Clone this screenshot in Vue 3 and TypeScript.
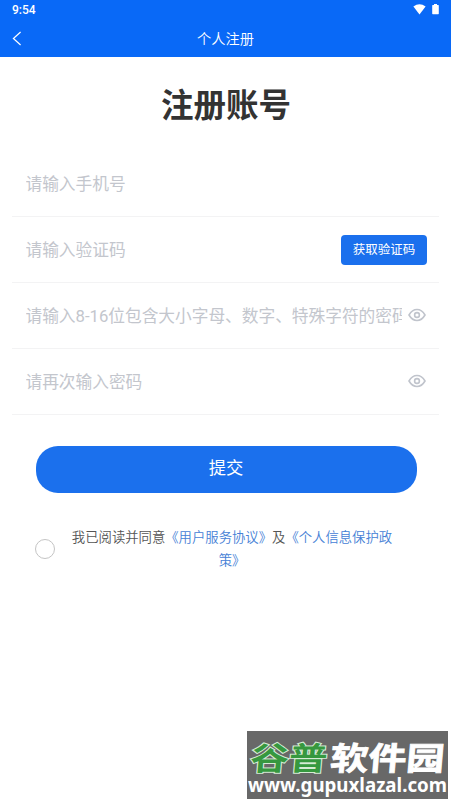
<script setup lang="ts">
import { ref } from 'vue'

interface Field {
  key: string
  placeholder: string
  kind: 'text' | 'code' | 'password'
}

const fields: Field[] = [
  { key: 'phone', placeholder: '请输入手机号', kind: 'text' },
  { key: 'code', placeholder: '请输入验证码', kind: 'code' },
  { key: 'password', placeholder: '请输入8-16位包含大小字母、数字、特殊字符的密码', kind: 'password' },
  { key: 'confirm', placeholder: '请再次输入密码', kind: 'password' },
]
const agreed = ref(false)
</script>

<template>
  <div class="page">
    <header class="top">
      <div class="status">
        <span class="time">9:54</span>
        <svg class="wifi" viewBox="0 0 13 11"><path d="M0.4 2.5Q6.5-1.9 12.6 2.5L6.5 10.4Z" fill="#fff" /></svg>
        <svg class="battery" viewBox="0 0 7 11"><path d="M2 0h3v1h1.2q.6 0 .6.6v8q0 .6-.6.6H.8q-.6 0-.6-.6v-8Q.2 1 .8 1H2z" fill="#fff" /></svg>
      </div>
      <nav class="nav">
        <svg class="back" viewBox="0 0 10 15"><path d="M8.6 1L1.4 7.5L8.6 14" fill="none" stroke="#fff" stroke-width="1.2" /></svg>
        <span class="nav-title">个人注册</span>
      </nav>
    </header>

    <h1 class="title">注册账号</h1>

    <form class="form" @submit.prevent>
      <div v-for="f in fields" :key="f.key" class="row">
        <span class="placeholder">{{ f.placeholder }}</span>
        <button v-if="f.kind === 'code'" type="button" class="get-code">获取验证码</button>
        <svg v-if="f.kind === 'password'" class="eye" viewBox="0 0 18 14">
          <path d="M1 7Q4.2 1.5 9 1.5T17 7Q13.8 12.5 9 12.5T1 7Z" />
          <circle cx="9" cy="7" r="2.4" />
        </svg>
      </div>
      <button type="submit" class="submit">提交</button>
    </form>

    <div class="agreement">
      <span class="radio" :class="{ on: agreed }" @click="agreed = !agreed"></span>
      <p class="terms">我已阅读并同意<a>《用户服务协议》</a>及<a>《个人信息保护政策》</a></p>
    </div>

    <div class="watermark">
      <svg viewBox="0 0 201 68">
        <g transform="translate(4 0) skewX(-5)">
          <text class="mark green" x="2" y="39" textLength="77" lengthAdjust="spacingAndGlyphs">谷普</text>
          <text class="mark" x="82" y="39" textLength="114" lengthAdjust="spacingAndGlyphs">软件园</text>
        </g>
        <text class="site" x="1" y="61" textLength="199" lengthAdjust="spacingAndGlyphs">www.gupuxlazal.com</text>
      </svg>
    </div>
  </div>
</template>

<style>
body {
  background: #fff;
}
</style>

<style scoped>
.page {
  position: relative;
  height: 802px;
  overflow: hidden;
  background: #fff;
  font-family: Roboto, "Noto Sans CJK SC", sans-serif;
}
.top {
  height: 57px;
  background: #0969f7;
  color: #fff;
}
.status {
  display: flex;
  align-items: center;
  height: 20px;
  padding: 0 12px;
}
.time {
  flex: 1;
  font-size: 12px;
  font-weight: 500;
}
.wifi {
  width: 13px;
  height: 11px;
  margin: -2px 6px 0 0;
}
.battery {
  width: 7px;
  height: 11px;
  margin-top: -2px;
}
.nav {
  display: grid;
  grid-template-columns: 40px 1fr 40px;
  align-items: center;
  height: 36px;
}
.back {
  width: 10px;
  height: 15px;
  margin-left: 12px;
}
.nav-title {
  text-align: center;
  font-size: 14.2px;
  line-height: 20px;
  font-weight: 350;
  padding-top: 1px;
}
.title {
  margin: 0;
  padding: 25px 0 0 1px;
  height: 69px;
  text-align: center;
  font-size: 32.5px;
  line-height: 48px;
  font-weight: 700;
  color: #333;
}
.form {
  padding: 0 12px;
}
.row {
  display: flex;
  align-items: center;
  box-sizing: border-box;
  height: 66px;
  padding: 0 12px 0 13.5px;
  border-bottom: 1px solid #f3f3f4;
}
.placeholder {
  flex: 1;
  min-width: 0;
  padding-top: 2px;
  margin-right: 6px;
  overflow: hidden;
  white-space: nowrap;
  font-size: 16.7px;
  line-height: 24px;
  font-weight: 400;
  color: #c3c6cd;
}
.get-code {
  width: 86px;
  height: 30px;
  padding: 0;
  border: 0;
  border-radius: 4px;
  background: #1b70ed;
  color: #fff;
  font: 400 12.5px/30px Roboto, "Noto Sans CJK SC", sans-serif;
}
.eye {
  width: 18px;
  height: 14px;
  margin: -1px 1px 0 0;
  fill: none;
  stroke: #c0c4cc;
  stroke-width: 1.6;
}
.submit {
  display: block;
  width: 381px;
  height: 47px;
  margin: 31px 0 0 23.5px;
  padding: 0 0 3px;
  border: 0;
  border-radius: 22px;
  background: #1b70ed;
  color: #fff;
  font: 400 17.3px/44px Roboto, "Noto Sans CJK SC", sans-serif;
}
.agreement {
  display: flex;
  align-items: center;
  padding: 33px 55px 0 35px;
}
.radio {
  box-sizing: border-box;
  flex: none;
  width: 20px;
  height: 20px;
  border: 1px solid #c4c4c4;
  border-radius: 50%;
}
.radio.on {
  background: #1b70ed;
}
.terms {
  flex: 1;
  margin: 0 0 0 13px;
  text-align: center;
  font-size: 13.35px;
  line-height: 23.4px;
  font-weight: 350;
  color: #555;
}
.terms a {
  color: #4681d6;
}
.watermark {
  position: absolute;
  left: 247px;
  top: 731px;
  width: 201px;
  height: 68px;
  background: #686868;
}
.watermark svg {
  display: block;
  width: 201px;
  height: 68px;
}
.mark {
  font: 700 32px "Noto Sans CJK SC", sans-serif;
  fill: #fff;
  stroke: #fff;
  stroke-width: 0.8px;
}
.green {
  fill: #36983f;
  stroke: #d5ecd5;
  stroke-width: 2px;
  paint-order: stroke;
}
.site {
  font: 700 19.5px "Noto Sans", sans-serif;
  fill: #fff;
}
</style>
